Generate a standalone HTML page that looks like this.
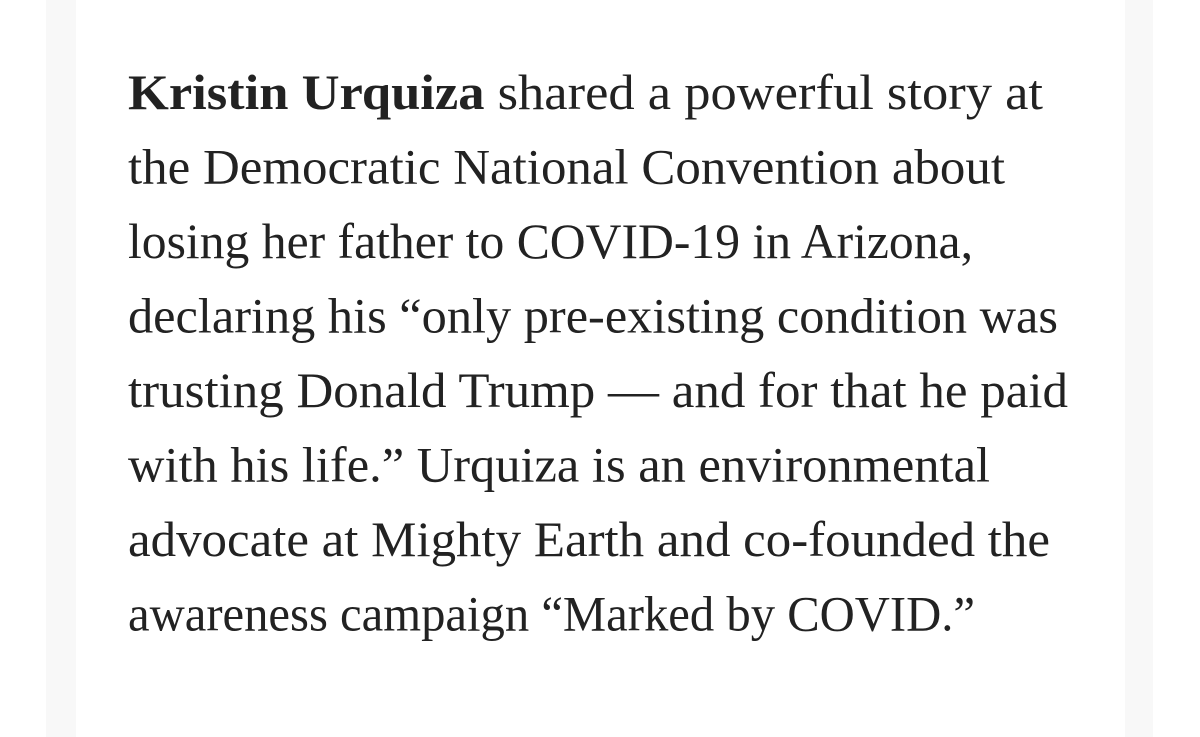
<!DOCTYPE html>
<html><head><meta charset="utf-8"><style>
html,body{margin:0;padding:0;background:#fff;width:1200px;height:737px;overflow:hidden}
.band{position:absolute;top:0;height:737px;background:#f8f8f8}
svg{position:absolute;left:0;top:0}
text{font-family:"Liberation Serif",serif;font-size:50px;fill:#222}
</style></head><body>
<div class="band" style="left:46px;width:30px"></div>
<div class="band" style="left:1125px;width:28px"></div>
<svg width="1200" height="737">
<text x="128" y="109" textLength="915" lengthAdjust="spacingAndGlyphs"><tspan font-weight="bold">Kristin Urquiza</tspan> shared a powerful story at</text>
<text x="128" y="183.5" textLength="877" lengthAdjust="spacingAndGlyphs">the Democratic National Convention about</text>
<text x="128" y="258" textLength="845" lengthAdjust="spacingAndGlyphs">losing her father to COVID-19 in Arizona,</text>
<text x="128" y="332.5" textLength="930" lengthAdjust="spacingAndGlyphs">declaring his “only pre-existing condition was</text>
<text x="128" y="407" textLength="940" lengthAdjust="spacingAndGlyphs">trusting Donald Trump — and for that he paid</text>
<text x="128" y="481.5" textLength="862" lengthAdjust="spacingAndGlyphs">with his life.” Urquiza is an environmental</text>
<text x="128" y="556" textLength="922" lengthAdjust="spacingAndGlyphs">advocate at Mighty Earth and co-founded the</text>
<text x="128" y="630.5" textLength="847" lengthAdjust="spacingAndGlyphs">awareness campaign “Marked by COVID.”</text>
</svg>
</body></html>
